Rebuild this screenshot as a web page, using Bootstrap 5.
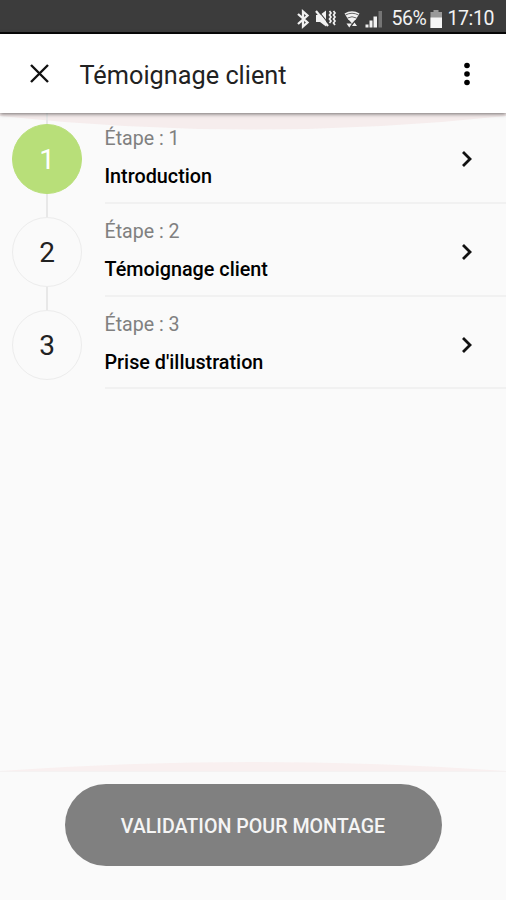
<!DOCTYPE html>
<html lang="fr">
<head>
<meta charset="utf-8">
<meta name="viewport" content="width=device-width, initial-scale=1">
<title>Témoignage client</title>
<link href="https://cdn.jsdelivr.net/npm/bootstrap@5.3.0/dist/css/bootstrap.min.css" rel="stylesheet">
<style>
body { font-family: Roboto, "Liberation Sans", sans-serif; background: #fafafa; color: #000; height: 900px; }
.statusbar { height: 34px; background: #3c3c3c; border-bottom: 2px solid #080808; color: #f2f2f2; font-size: 19.5px; letter-spacing: -.4px; line-height: 30px; padding: 5px 12px 0 0; }
.statusbar span { margin-top: 1px; }
.appbar { height: 79px; background: #fff; box-shadow: 0 1px 4px rgba(0,0,0,.55); z-index: 2; padding: 0 29px; }
.appbar h1 { font-size: 25.3px; line-height: 30px; color: #222; margin-top: 4px; padding-left: 29.5px; }
.glow-top { height: 17px; top: 0; left: 0; }
.glow-bottom { height: 10px; }
.steps { margin-top: -2px; }
.step { height: 92.8px; }
.rail { width: 93px; }
.rail::before { content: ""; position: absolute; left: 46px; top: 0; bottom: 0; width: 2px; background: #e8e8e8; }
.step:last-child .rail::before { bottom: 50%; }
.bullet { width: 70px; height: 70px; left: 12px; top: 13px; padding-top: 2px; border: 1.5px solid #ececec; background: #fafafa; font-size: 28px; color: #222; }
.bullet-on { background: #b8df79; border-color: #b8df79; color: #fff; }
.step-body { margin-left: 11.5px; border-bottom: 2px solid #f1f1f1; padding-right: 32px; }
.step-body > svg { margin-top: 6px; }
.step-no { font-size: 19.6px; line-height: 24px; color: #808080; margin-top: 16.4px; }
.step-name { font-size: 19.8px; line-height: 24px; font-weight: 500; margin-top: 14px; }
.bottombar { height: 129px; border-top: 1px solid #f5f2f2; padding-top: 12px; }
.btn-validate { width: 377px; height: 82px; background: #808080; color: #f5f5f5; font-size: 19.65px; font-weight: 500; border: 0; padding-top: 10px; }
</style>
</head>
<body class="d-flex flex-column overflow-hidden">
<div class="statusbar d-flex justify-content-end align-items-center flex-shrink-0">
  <svg width="91" height="22" viewBox="298 7 91 22" fill="none" stroke="#f2f2f2" stroke-width="2">
    <path d="M300 13l9.500 8.500-4.500 4V10.500l4.500 4-9.500 8.500" stroke-width="2.300"/>
    <path d="M318 14h4l6-4.500v16l-6-4.500h-4z" fill="#f2f2f2" stroke="none"/>
    <path d="M320.500 10l10 12.500" stroke="#3c3c3c" stroke-width="1.200"/><path d="M318 10l12 15" stroke-width="2.200"/>
    <path d="M331.500 10l1.500 2-1.500 2 1.500 2-1.500 2 1.500 2-1.500 2M335.500 10l1.500 2-1.500 2 1.500 2-1.500 2 1.500 2-1.500 2 1.500 2" stroke-width="1.700"/>
    <path d="M346.500 12.500q7.500-4.500 15 0L357.500 19h-7z" fill="#f2f2f2" stroke="none"/>
    <path d="M347.500 14q6.500-3.500 13 0M349.500 17q4.500-2.500 9 0" stroke="#666" stroke-width="1"/>
    <path d="M350.500 18.500h7l-3.500 4z" fill="#f2f2f2" stroke="none"/>
    <path d="M348.500 22.500h5.500l-2.750 4zM354 25l2.500-3.500L359 25z" fill="#f2f2f2" stroke="none"/>
    <path d="M367.500 23.500h3v3h-3zM371.500 19.500h3v7h-3zM375.500 15.500h3.500v11h-3.500z" fill="#f2f2f2" stroke="none"/>
    <path d="M380.500 10h3.500v16.500h-3.500z" fill="#757575" stroke="none"/>
  </svg>
  <span class="ms-1">56%</span>
  <svg class="mx-1" width="13" height="20" viewBox="0 0 13 20"><path d="M3.500 1h5v3h-5zM.5 3h11.500v16H.5z" fill="#999"/><path d="M.5 8.500h11.500V19H.5z" fill="#f5f5f5"/></svg>
  <span>17:10</span>
</div>
<header class="appbar d-flex align-items-center flex-shrink-0 position-relative">
  <svg width="21" height="21" viewBox="0 0 21 21" stroke="#111" stroke-width="2.400"><path d="M2 2l17 17M19 2L2 19"/></svg>
  <h1 class="fw-normal mb-0 flex-grow-1">Témoignage client</h1>
  <svg width="20" height="26" viewBox="0 0 20 26"><circle cx="10" cy="4.500" r="2.800"/><circle cx="10" cy="13" r="2.800"/><circle cx="10" cy="21.500" r="2.800"/></svg>
</header>
<main class="flex-grow-1 position-relative d-flex flex-column">
  <svg class="glow-top position-absolute w-100" viewBox="0 0 506 17" preserveAspectRatio="none"><path d="M0 3Q253 30 506 3V0H0z" fill="#f6eded"/></svg>
  <div class="steps position-relative">
    <div class="step d-flex">
      <div class="rail position-relative flex-shrink-0"><span class="bullet bullet-on position-absolute rounded-circle d-flex align-items-center justify-content-center">1</span></div>
      <div class="step-body flex-grow-1 d-flex align-items-center justify-content-between">
        <div class="align-self-start"><div class="step-no">Étape : 1</div><div class="step-name">Introduction</div></div>
        <svg width="14" height="20" viewBox="0 0 14 20" fill="none" stroke="#111" stroke-width="2.800"><path d="M3 3l7 7-7 7"/></svg>
      </div>
    </div>
    <div class="step d-flex">
      <div class="rail position-relative flex-shrink-0"><span class="bullet position-absolute rounded-circle d-flex align-items-center justify-content-center">2</span></div>
      <div class="step-body flex-grow-1 d-flex align-items-center justify-content-between">
        <div class="align-self-start"><div class="step-no">Étape : 2</div><div class="step-name">Témoignage client</div></div>
        <svg width="14" height="20" viewBox="0 0 14 20" fill="none" stroke="#111" stroke-width="2.800"><path d="M3 3l7 7-7 7"/></svg>
      </div>
    </div>
    <div class="step d-flex">
      <div class="rail position-relative flex-shrink-0"><span class="bullet position-absolute rounded-circle d-flex align-items-center justify-content-center">3</span></div>
      <div class="step-body flex-grow-1 d-flex align-items-center justify-content-between">
        <div class="align-self-start"><div class="step-no">Étape : 3</div><div class="step-name">Prise d'illustration</div></div>
        <svg width="14" height="20" viewBox="0 0 14 20" fill="none" stroke="#111" stroke-width="2.800"><path d="M3 3l7 7-7 7"/></svg>
      </div>
    </div>
  </div>
  <svg class="glow-bottom w-100 mt-auto" viewBox="0 0 506 10" preserveAspectRatio="none"><path d="M0 10Q253-8 506 10z" fill="#f9f0f0"/></svg>
</main>
<footer class="bottombar flex-shrink-0 text-center">
  <button class="btn btn-validate rounded-pill" type="button">VALIDATION POUR MONTAGE</button>
</footer>
<script src="https://cdn.jsdelivr.net/npm/bootstrap@5.3.0/dist/js/bootstrap.bundle.min.js"></script>
</body>
</html>
